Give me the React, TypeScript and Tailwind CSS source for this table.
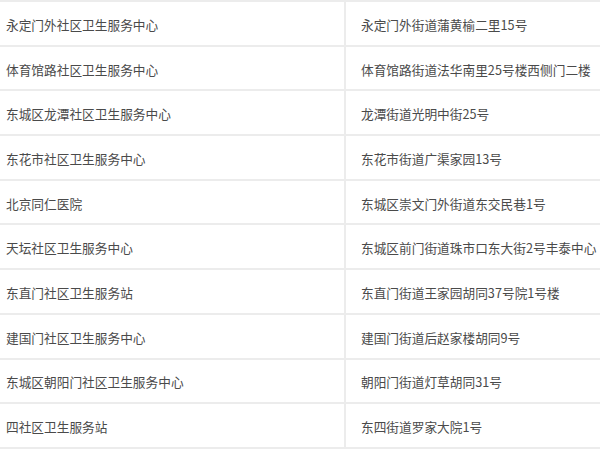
const rows = [
  ["永定门外社区卫生服务中心", "永定门外街道蒲黄榆二里15号"],
  ["体育馆路社区卫生服务中心", "体育馆路街道法华南里25号楼西侧门二楼"],
  ["东城区龙潭社区卫生服务中心", "龙潭街道光明中街25号"],
  ["东花市社区卫生服务中心", "东花市街道广渠家园13号"],
  ["北京同仁医院", "东城区崇文门外街道东交民巷1号"],
  ["天坛社区卫生服务中心", "东城区前门街道珠市口东大街2号丰泰中心"],
  ["东直门社区卫生服务站", "东直门街道王家园胡同37号院1号楼"],
  ["建国门社区卫生服务中心", "建国门街道后赵家楼胡同9号"],
  ["东城区朝阳门社区卫生服务中心", "朝阳门街道灯草胡同31号"],
  ["四社区卫生服务站", "东四街道罗家大院1号"],
]

const App = () => {
  return (
    <div
      className="w-[600px] h-[450px] overflow-hidden bg-white text-[12.7px] text-[#4a4a4a]"
      style={{ fontFamily: '"Noto Sans CJK SC", "Noto Sans", sans-serif' }}
    >
      <div className="border-t-2 border-[#ececec]">
        {rows.map(([name, addr]) => (
          <div key={name} className="flex h-[44.7px] border-b-2 border-[#ececec]">
            <div className="w-[346px] flex items-center pl-[6px] pt-[2px] border-r-2 border-[#ececec]">
              {name}
            </div>
            <div className="flex-1 flex items-center pl-[15px] pt-[2px] whitespace-nowrap">{addr}</div>
          </div>
        ))}
      </div>
    </div>
  )
}

export default App
